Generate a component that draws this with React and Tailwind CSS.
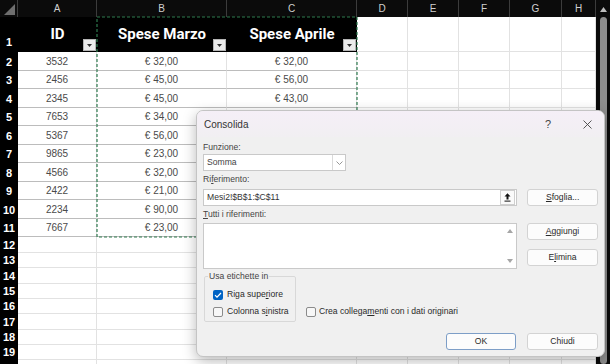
import React from "react";

const colW = ["w-[79px]", "w-[130px]", "w-[130px]", "w-[51px]", "w-[51px]", "w-[51px]", "w-[52px]", "w-[34px]"];
const letters = ["A", "B", "C", "D", "E", "F", "G", "H"];

const data = [
  { n: 2, h: "h-[19px]", id: "3532", b: "€ 32,00", c: "€ 32,00" },
  { n: 3, h: "h-[18px]", id: "2456", b: "€ 45,00", c: "€ 56,00" },
  { n: 4, h: "h-[19px]", id: "2345", b: "€ 45,00", c: "€ 43,00" },
  { n: 5, h: "h-[18px]", id: "7653", b: "€ 34,00", c: "€ 38,00" },
  { n: 6, h: "h-[19px]", id: "5367", b: "€ 56,00", c: "€ 41,00" },
  { n: 7, h: "h-[18px]", id: "9865", b: "€ 23,00", c: "€ 27,00" },
  { n: 8, h: "h-[19px]", id: "4566", b: "€ 32,00", c: "€ 30,00" },
  { n: 9, h: "h-[18px]", id: "2422", b: "€ 21,00", c: "€ 25,00" },
  { n: 10, h: "h-[19px]", id: "2234", b: "€ 90,00", c: "€ 85,00" },
  { n: 11, h: "h-[18px]", id: "7667", b: "€ 23,00", c: "€ 29,00" },
];

const empty = [
  { n: 12, h: "h-[16px]" },
  { n: 13, h: "h-[15px]" },
  { n: 14, h: "h-[16px]" },
  { n: 15, h: "h-[15px]" },
  { n: 16, h: "h-[15px]" },
  { n: 17, h: "h-[16px]" },
  { n: 18, h: "h-[15px]" },
  { n: 19, h: "h-[15px]" },
  { n: "", h: "h-[15px]" },
];

function RowNum({ n, pb = "pb-[2px]" }) {
  return (
    <div className={`w-[18px] shrink-0 bg-black flex items-end justify-center ${pb} text-[11px] leading-[13px] font-bold text-white`}>
      {n}
    </div>
  );
}

function FilterBtn() {
  return (
    <div className="absolute right-[1px] bottom-[1px] w-[13px] h-[12px] bg-[#ececec] border border-[#b5b5b5] flex items-center justify-center">
      <svg width="5" height="3" viewBox="0 0 5 3">
        <path d="M0 0h5L2.5 3z" fill="#333" />
      </svg>
    </div>
  );
}

function EmptyCells({ from }) {
  return colW.slice(from).map((w, i) => (
    <div key={i} className={`${w} shrink-0 border-r border-b border-[#e2e2e2]`} />
  ));
}

function Check({ checked }) {
  if (checked) {
    return (
      <div className="w-[10px] h-[10px] rounded-[2px] bg-[#0063c4] flex items-center justify-center">
        <svg width="8" height="6" viewBox="0 0 8 6">
          <path d="M1 3.2l2 2L7 1" stroke="white" strokeWidth="1.2" fill="none" />
        </svg>
      </div>
    );
  }
  return <div className="w-[10px] h-[10px] rounded-[2px] border border-[#8b8b8b] bg-[#f7f7f7]" />;
}

function Btn({ children, extra = "border-[#d3d3d3]" }) {
  return (
    <div className={`h-[17px] w-[71px] rounded-[3px] border ${extra} bg-[#fcfcfc] flex items-center justify-center text-[#2a2a2a]`}>
      {children}
    </div>
  );
}

function Dialog() {
  return (
    <div className="absolute left-[196px] top-[110px] w-[409px] h-[247px] rounded-[7px] border border-[#c4c4c4] bg-[#f0f0f0] shadow-[0_4px_14px_rgba(0,0,0,0.28)] overflow-hidden font-['Liberation_Sans',sans-serif] text-[8.6px] text-[#2a2a2a]">
      <div className="h-[26px] flex items-center pl-[7px] pr-[12px] bg-gradient-to-b from-[#f5eff7] to-[#f1eff2]">
        <span className="text-[10px] text-[#333]">Consolida</span>
        <span className="ml-auto text-[11px] text-[#444]">?</span>
        <svg className="ml-[32px]" width="9" height="9" viewBox="0 0 9 9">
          <path d="M0.5 0.5l8 8M8.5 0.5l-8 8" stroke="#444" strokeWidth="0.9" />
        </svg>
      </div>

      <div className="px-[6px]">
        <div className="mt-[5px] h-[11px] leading-[11px] text-[#444]">Funzione:</div>
        <div className="mt-[1px] w-[143px] h-[17px] bg-white border border-[#c9c9c9] flex items-center">
          <span className="pl-[3px] text-[#444]">Somma</span>
          <div className="ml-auto h-full w-[13px] border-l border-[#dadada] flex items-center justify-center">
            <svg width="7" height="4" viewBox="0 0 7 4">
              <path d="M0.5 0.5l3 3 3-3" stroke="#8a8a8a" strokeWidth="0.9" fill="none" />
            </svg>
          </div>
        </div>

        <div className="mt-[3px] h-[11px] leading-[11px] text-[#444]">
          Ri<u>f</u>erimento:
        </div>
        <div className="mt-[4px] flex gap-[10px]">
          <div className="w-[316px] h-[17px] bg-white border border-[#c9c9c9] flex items-center">
            <span className="pl-[3px] text-[#333]">Mesi2!$B$1:$C$11</span>
            <div className="ml-auto mr-[1px] w-[15px] h-[15px] border border-[#cfcfcf] bg-[#fafafa] flex items-center justify-center">
              <svg width="7" height="9" viewBox="0 0 7 9">
                <path d="M3.5 0.3L0.5 3.6h2v3h2v-3h2z" fill="#111" />
                <rect x="0.5" y="7.6" width="6" height="1" fill="#111" />
              </svg>
            </div>
          </div>
          <Btn>
            <span>
              <u>S</u>foglia...
            </span>
          </Btn>
        </div>

        <div className="mt-[3px] h-[11px] leading-[11px] text-[#444]">
          <u>T</u>utti i riferimenti:
        </div>
        <div className="mt-[3px] flex gap-[10px]">
          <div className="w-[316px] h-[46px] bg-white border border-[#c9c9c9] flex justify-end">
            <div className="w-[12px] flex flex-col items-center justify-between py-[5px]">
              <svg width="6" height="4" viewBox="0 0 6 4">
                <path d="M0 4h6L3 0z" fill="#a6a6a6" />
              </svg>
              <svg width="6" height="4" viewBox="0 0 6 4">
                <path d="M0 0h6L3 4z" fill="#a6a6a6" />
              </svg>
            </div>
          </div>
          <div className="flex flex-col gap-[9px]">
            <Btn>
              <span>
                <u>A</u>ggiungi
              </span>
            </Btn>
            <Btn>
              <span>
                E<u>l</u>imina
              </span>
            </Btn>
          </div>
        </div>

        <div className="mt-[2px] flex items-end">
          <fieldset className="ml-[1px] w-[92px] border border-[#d8d8d8] rounded-[2px] px-[3px] pb-[1px]">
            <legend className="px-[1px] h-[11px] leading-[11px] text-[#444]">Usa etichette in</legend>
            <div className="pt-[4px] pl-[5px]">
              <div className="h-[17px] flex items-center gap-[4px]">
                <Check checked />
                <span>
                  Riga supe<u>r</u>iore
                </span>
              </div>
              <div className="h-[17px] flex items-center gap-[4px]">
                <Check />
                <span>
                  Colonna s<u>i</u>nistra
                </span>
              </div>
            </div>
          </fieldset>
          <div className="ml-[10px] h-[17px] mb-[2px] flex items-center gap-[3px]">
            <Check />
            <span>
              Crea collega<u>m</u>enti con i dati originari
            </span>
          </div>
        </div>

        <div className="mt-[11px] flex justify-end gap-[11px]">
          <div className="h-[17px] w-[70px] rounded-[3px] border border-[#7d9ec7] bg-[#fcfcfc] flex items-center justify-center">
            OK
          </div>
          <Btn>Chiudi</Btn>
        </div>
      </div>
    </div>
  );
}

export default function App() {
  return (
    <div className="relative w-[610px] h-[364px] overflow-hidden bg-white flex font-['Liberation_Sans',sans-serif]">
      <div className="w-[596px] shrink-0 flex flex-col">
        {/* column letters */}
        <div className="h-[17px] shrink-0 flex bg-[#0b0b0b]">
          <div className="w-[18px] shrink-0 border-r border-[#3c3c3c] flex items-end justify-end p-[2px]">
            <svg width="11" height="11" viewBox="0 0 11 11">
              <path d="M11 0v11H0z" fill="#6e6e6e" />
            </svg>
          </div>
          {letters.map((l, i) => (
            <div key={l} className={`${colW[i]} shrink-0 border-r border-[#3c3c3c] flex items-center justify-center text-[10px] text-[#cfcfcf]`}>
              {l}
            </div>
          ))}
        </div>

        {/* header row */}
        <div className="h-[35px] shrink-0 flex">
          <RowNum n={1} pb="pb-[3px]" />
          <div className="relative w-[79px] shrink-0 bg-black flex items-center justify-center font-['Roboto',sans-serif] font-bold text-[15px] text-white">
            ID
            <FilterBtn />
          </div>
          <div className="relative w-[130px] shrink-0 bg-black flex items-center justify-center font-['Roboto',sans-serif] font-bold text-[15px] text-white">
            Spese Marzo
            <FilterBtn />
          </div>
          <div className="relative w-[130px] shrink-0 bg-black flex items-center justify-center font-['Roboto',sans-serif] font-bold text-[15px] text-white">
            Spese Aprile
            <FilterBtn />
          </div>
          <EmptyCells from={3} />
        </div>

        {data.map((r) => (
          <div key={r.n} className={`${r.h} shrink-0 flex`}>
            <RowNum n={r.n} />
            <div className="w-[79px] shrink-0 border-b border-r border-b-[#bcbcbc] border-r-[#e2e2e2] flex items-center justify-center text-[10px] text-[#4a4a4a]">
              {r.id}
            </div>
            <div className="w-[130px] shrink-0 border-b border-r border-b-[#bcbcbc] border-r-[#e2e2e2] flex items-center justify-center text-[10px] text-[#4a4a4a]">
              {r.b}
            </div>
            <div className="w-[130px] shrink-0 border-b border-r border-b-[#bcbcbc] border-r-[#e2e2e2] flex items-center justify-center text-[10px] text-[#4a4a4a]">
              {r.c}
            </div>
            <EmptyCells from={3} />
          </div>
        ))}

        {empty.map((r, i) => (
          <div key={i} className={`${r.h} shrink-0 flex`}>
            <RowNum n={r.n} pb="pb-[1px]" />
            <EmptyCells from={0} />
          </div>
        ))}
      </div>

      {/* vertical scrollbar */}
      <div className="w-[14px] shrink-0 bg-[#0b0b0b] flex flex-col items-center pl-[1px]">
        <svg className="mt-[7px]" width="7" height="5" viewBox="0 0 7 5">
          <path d="M0 5h7L3.5 0z" fill="#bdbdbd" />
        </svg>
        <div className="mt-[5px] w-[7px] flex-1 rounded-full bg-[#8d8d8d]" />
      </div>

      {/* copy selection marquee */}
      <svg className="absolute left-[96px] top-[16px]" width="263" height="223" viewBox="0 0 263 223">
        <rect x="1" y="1" width="260" height="220" fill="none" stroke="#2e7a4f" strokeWidth="1.2" strokeDasharray="3 2" />
      </svg>

      <Dialog />
    </div>
  );
}
